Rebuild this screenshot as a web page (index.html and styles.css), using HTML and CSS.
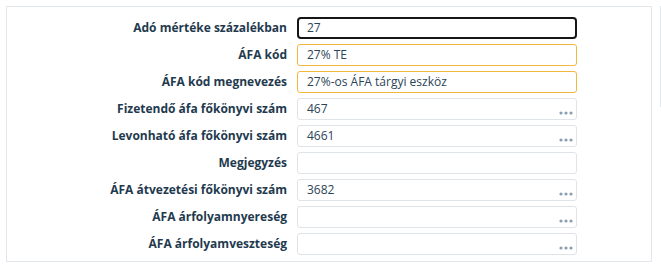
FILE: index.html
```html
<!DOCTYPE html>
<html lang="hu">
<head>
<meta charset="utf-8">
<link rel="stylesheet" href="styles.css">
</head>
<body>
<div class="page">
  <section class="panel">
    <div class="form">
      <label class="lbl">Adó mértéke százalékban</label>
      <div class="field field-focus"><span class="val">27</span></div>

      <label class="lbl">ÁFA kód</label>
      <div class="field field-warn"><span class="val">27% TE</span></div>

      <label class="lbl">ÁFA kód megnevezés</label>
      <div class="field field-warn"><span class="val">27%-os ÁFA tárgyi eszköz</span></div>

      <label class="lbl">Fizetendő áfa főkönyvi szám</label>
      <div class="field"><span class="val">467</span><svg class="dots" width="14" height="4" viewBox="0 0 14 4"><circle cx="2" cy="2" r="1.6"/><circle cx="7" cy="2" r="1.6"/><circle cx="12" cy="2" r="1.6"/></svg></div>

      <label class="lbl">Levonható áfa főkönyvi szám</label>
      <div class="field"><span class="val">4661</span><svg class="dots" width="14" height="4" viewBox="0 0 14 4"><circle cx="2" cy="2" r="1.6"/><circle cx="7" cy="2" r="1.6"/><circle cx="12" cy="2" r="1.6"/></svg></div>

      <label class="lbl">Megjegyzés</label>
      <div class="field"><span class="val"></span></div>

      <label class="lbl">ÁFA átvezetési főkönyvi szám</label>
      <div class="field"><span class="val">3682</span><svg class="dots" width="14" height="4" viewBox="0 0 14 4"><circle cx="2" cy="2" r="1.6"/><circle cx="7" cy="2" r="1.6"/><circle cx="12" cy="2" r="1.6"/></svg></div>

      <label class="lbl">ÁFA árfolyamnyereség</label>
      <div class="field"><span class="val"></span><svg class="dots" width="14" height="4" viewBox="0 0 14 4"><circle cx="2" cy="2" r="1.6"/><circle cx="7" cy="2" r="1.6"/><circle cx="12" cy="2" r="1.6"/></svg></div>

      <label class="lbl">ÁFA árfolyamveszteség</label>
      <div class="field"><span class="val"></span><svg class="dots" width="14" height="4" viewBox="0 0 14 4"><circle cx="2" cy="2" r="1.6"/><circle cx="7" cy="2" r="1.6"/><circle cx="12" cy="2" r="1.6"/></svg></div>
    </div>
  </section>
  <section class="panel-side"></section>
</div>
</body>
</html>
```

FILE: styles.css
```css
html, body {
  margin: 0;
  padding: 0;
  background: #ffffff;
  overflow: hidden;
}

body {
  font-family: "Open Sans", "Noto Sans", sans-serif;
  font-size: 12px;
}

.page {
  display: flex;
  align-items: flex-start;
  padding: 6px 0 0 6px;
  gap: 8px;
  overflow: hidden;
}

.panel {
  flex: 0 0 auto;
  width: 644px;
  border: 1px solid #e2e7eb;
  padding: 10px 0 6px 0;
}

.panel-side {
  flex: 0 0 auto;
  width: 200px;
  height: 99px;
  border: 1px solid #e2e7eb;
}

.form {
  display: grid;
  grid-template-columns: 280px 280px;
  column-gap: 10px;
  row-gap: 5px;
  align-items: center;
}

.lbl {
  text-align: right;
  font-weight: 700;
  color: #1f3a4e;
  white-space: nowrap;
  line-height: 16px;
}

.field {
  position: relative;
  box-sizing: border-box;
  height: 22px;
  border: 1px solid #dfe4e8;
  border-radius: 3px;
  padding: 0 9px;
  display: flex;
  align-items: center;
  color: #2b4456;
  line-height: 16px;
}

.field-focus {
  border: 2px solid #161616;
  border-radius: 4px;
  padding: 0 8px;
}

.field-warn {
  border-color: #f3b73d;
}

.dots {
  position: absolute;
  right: 3px;
  bottom: 4px;
  fill: #8d9db0;
}
```
